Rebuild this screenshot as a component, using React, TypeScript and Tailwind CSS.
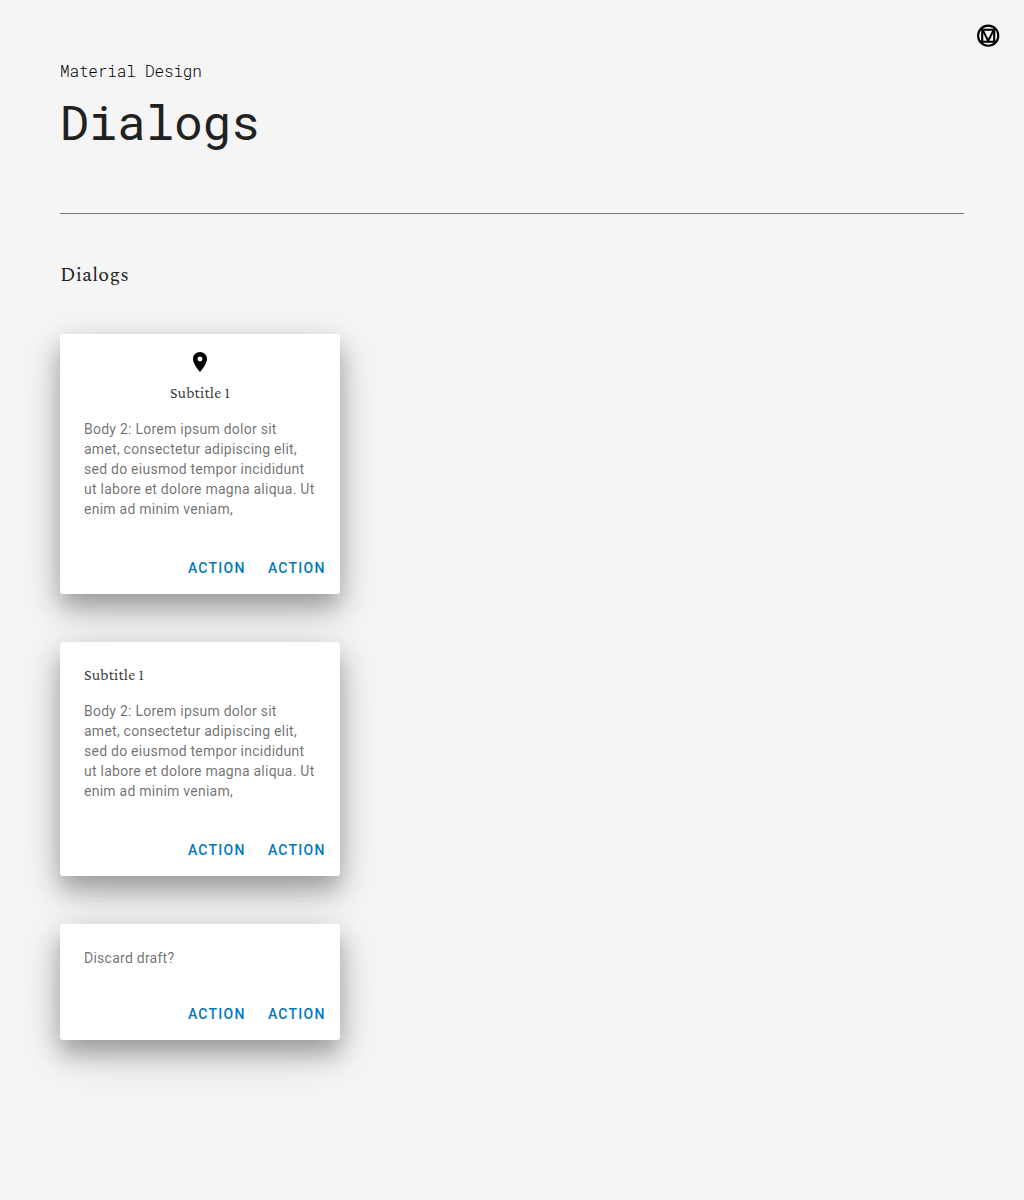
import React from "react";

function MaterialLogo() {
  return (
    <svg className="size-6" viewBox="0 0 24 24" fill="none" stroke="#000" strokeWidth="2.1">
      <circle cx="12.2" cy="11.7" r="10.1" />
      <path d="M6.2 5.7h12v12h-12z" />
      <path d="M6.7 5.9l5.5 11L17.7 5.9" />
    </svg>
  );
}

function Pin() {
  return (
    <svg className="mx-auto block size-6" viewBox="0 0 24 24" fill="#000">
      <path d="M12 2C8.13 2 5 5.13 5 9c0 5.25 7 13 7 13s7-7.75 7-13c0-3.87-3.13-7-7-7zm0 9.5a2.5 2.5 0 0 1 0-5 2.5 2.5 0 0 1 0 5z" />
    </svg>
  );
}

function Actions() {
  return (
    <div className="flex h-[52px] justify-end gap-2 p-2 text-sm font-medium tracking-[1.25px] text-[#0077bd]">
      <button className="h-9 w-[72px] pl-[1.5px] leading-9">ACTION</button>
      <button className="h-9 w-[72px] pl-[1.5px] leading-9">ACTION</button>
    </div>
  );
}

function Dialog({ className, children }: { className: string; children: React.ReactNode }) {
  return (
    <section
      className={
        "flex w-[280px] flex-col justify-between rounded-[3px] bg-white shadow-[0_13px_22px_rgba(0,0,0,0.25),0_14px_46px_rgba(0,0,0,0.19)] " +
        className
      }
    >
      {children}
      <Actions />
    </section>
  );
}

function Body() {
  return (
    <p className="w-[240px] text-sm leading-5 tracking-[0.25px] text-black/58">
      Body 2: Lorem ipsum dolor sit
      <br />
      amet, consectetur adipiscing elit,
      <br />
      sed do eiusmod tempor incididunt
      <br />
      ut labore et dolore magna aliqua. Ut
      <br />
      enim ad minim veniam,
    </p>
  );
}

function Subtitle({ className }: { className: string }) {
  return (
    <h3 className={`font-['Crimson_Pro','Liberation_Serif',serif] text-base leading-6 tracking-[0.15px] whitespace-nowrap text-black/80 ${className}`}>
      Subtitle 1
    </h3>
  );
}

export default function App() {
  return (
    <main className="relative min-h-[1200px] bg-[#f5f5f5] px-[60px] pt-[59px] font-['Roboto',sans-serif] text-[#212121]">
      <div className="absolute top-6 right-6">
        <MaterialLogo />
      </div>
      <header className="h-[155px] border-b border-[#757575] font-['Roboto_Mono','Liberation_Mono',monospace]">
        <p className="text-base leading-6 font-light tracking-[-0.15px] text-black">Material Design</p>
        <h1 className="mt-[7px] text-5xl leading-[64px] tracking-[-0.3px]">Dialogs</h1>
      </header>
      <h2 className="mt-[49px] font-['Spectral','Liberation_Serif',serif] text-xl leading-6 tracking-[0.25px]">Dialogs</h2>
      <div className="mt-[47px] flex flex-col gap-12">
        <Dialog className="h-[260px]">
          <div className="px-6 pt-4">
            <Pin />
            <Subtitle className="mt-[7px] mb-[14px] text-center" />
            <Body />
          </div>
        </Dialog>
        <Dialog className="h-[234px]">
          <div className="px-6 pt-[21px]">
            <Subtitle className="mb-[14px]" />
            <Body />
          </div>
        </Dialog>
        <Dialog className="h-[116px]">
          <p className="px-6 pt-6 text-sm leading-5 tracking-[0.25px] text-black/58">Discard draft?</p>
        </Dialog>
      </div>
    </main>
  );
}
